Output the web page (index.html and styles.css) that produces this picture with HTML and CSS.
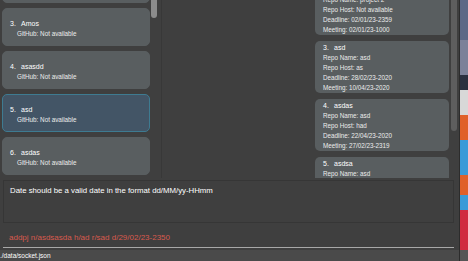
FILE: index.html
```html
<!DOCTYPE html>
<html>

<head>
    <title>Project Book</title>
    <link rel="stylesheet" href="styles.css">
</head>

<body>
    <div class="window">
        <div class="app">
            <div class="panels">
                <div class="person-pane">
                    <div class="person-list">
                        <div class="person-card">
                            <p class="card-title"><span class="index">2.</span>Bob</p>
                            <p class="card-line">GitHub: Not available</p>
                        </div>
                        <div class="person-card">
                            <p class="card-title"><span class="index">3.</span>Amos</p>
                            <p class="card-line">GitHub: Not available</p>
                        </div>
                        <div class="person-card">
                            <p class="card-title"><span class="index">4.</span>asasdd</p>
                            <p class="card-line">GitHub: Not available</p>
                        </div>
                        <div class="person-card selected">
                            <p class="card-title"><span class="index">5.</span>asd</p>
                            <p class="card-line">GitHub: Not available</p>
                        </div>
                        <div class="person-card">
                            <p class="card-title"><span class="index">6.</span>asdas</p>
                            <p class="card-line">GitHub: Not available</p>
                        </div>
                    </div>
                    <div class="scrollbar">
                        <div class="thumb person-thumb"></div>
                    </div>
                </div>

                <div class="middle-pane"></div>

                <div class="project-pane">
                    <div class="project-list">
                        <div class="project-card">
                            <p class="card-title"><span class="index">2.</span>project 2</p>
                            <p class="card-line">Repo Name: project 2</p>
                            <p class="card-line">Repo Host: Not available</p>
                            <p class="card-line">Deadline: 02/01/23-2359</p>
                            <p class="card-line">Meeting: 02/01/23-1000</p>
                        </div>
                        <div class="project-card">
                            <p class="card-title"><span class="index">3.</span>asd</p>
                            <p class="card-line">Repo Name: asd</p>
                            <p class="card-line">Repo Host: as</p>
                            <p class="card-line">Deadline: 28/02/23-2020</p>
                            <p class="card-line">Meeting: 10/04/23-2020</p>
                        </div>
                        <div class="project-card">
                            <p class="card-title"><span class="index">4.</span>asdas</p>
                            <p class="card-line">Repo Name: asd</p>
                            <p class="card-line">Repo Host: had</p>
                            <p class="card-line">Deadline: 22/04/23-2020</p>
                            <p class="card-line">Meeting: 27/02/23-2319</p>
                        </div>
                        <div class="project-card">
                            <p class="card-title"><span class="index">5.</span>asdsa</p>
                            <p class="card-line">Repo Name: asd</p>
                            <p class="card-line">Repo Host: asd</p>
                            <p class="card-line">Deadline: 01/01/23-2020</p>
                            <p class="card-line">Meeting: 01/01/23-2020</p>
                        </div>
                    </div>
                    <div class="scrollbar">
                        <div class="thumb project-thumb"></div>
                    </div>
                </div>
            </div>

            <div class="result-display">
                <p>Date should be a valid date in the format dd/MM/yy-HHmm</p>
            </div>

            <div class="command-box">
                <p class="command-text error">addpj n/asdsasda h/ad r/sad d/29/02/23-2350</p>
            </div>

            <div class="status-bar">./data/socket.json</div>
        </div>

        <!-- bit of the desktop showing past the window edge -->
        <div class="desktop">
            <div class="strip s1"></div>
            <div class="strip s2"></div>
            <div class="strip s3"></div>
            <div class="strip s4"></div>
            <div class="strip s5"></div>
            <div class="strip s6"></div>
            <div class="strip s7"></div>
            <div class="strip s8"></div>
            <div class="strip s9"></div>
            <div class="strip s10"></div>
        </div>
    </div>
</body>

</html>
```

FILE: styles.css
```css
body {
    font-family: "Liberation Sans", Arial, sans-serif;
    background-color: #3f3f3f;
    color: #ffffff;
    margin: 0;
    padding: 0;
    width: 468px;
    height: 261px;
    overflow: hidden;
}

p {
    margin: 0;
}

.window {
    display: flex;
    height: 261px;
}

.app {
    width: 460px;
    display: flex;
    flex-direction: column;
    background-color: #3f3f3f;
}

.panels {
    height: 180px;
    display: flex;
    overflow: hidden;
}

/* person list */
.person-pane {
    width: 162px;
    display: flex;
    gap: 1px;
    padding-left: 2px;
    box-sizing: border-box;
    border-right: 1px solid #383838;
}

.person-list {
    width: 148px;
    display: flex;
    flex-direction: column;
    gap: 5px;
    margin-top: -35px;
}

.person-card {
    flex: none;
    height: 38px;
    box-sizing: border-box;
    padding: 10px 0 8px 7px;
    background-color: #595e60;
    border: 1px solid #595e60;
    border-radius: 5px;
}

.person-card.selected {
    background-color: #435566;
    border-color: #3e7b91;
}

.person-card .card-line {
    padding-left: 7px;
}

.card-title {
    font-size: 7px;
    line-height: 10px;
}

.index {
    display: inline-block;
    width: 11px;
}

.card-line {
    font-size: 6.3px;
    line-height: 10px;
    color: #ececec;
}

/* scrollbars */
.scrollbar {
    width: 6px;
}

.thumb {
    background-color: #8c8c8c;
    border-radius: 0 0 3px 3px;
}

.person-thumb {
    height: 18px;
}

.project-thumb {
    height: 131px;
    background-color: #5e5e5e;
}

.middle-pane {
    width: 149px;
}

/* project list */
.project-pane {
    flex: 1;
    display: flex;
    gap: 2px;
    padding-left: 4px;
}

.project-list {
    width: 134px;
    display: flex;
    flex-direction: column;
    gap: 6px;
    margin-top: -17px;
}

.project-card {
    flex: none;
    height: 52px;
    box-sizing: border-box;
    padding: 2px 0 0 8px;
    background-color: #595e60;
    border-radius: 5px;
}

/* result + command */
.result-display {
    height: 43px;
    margin: 2px 5px 0 3px;
    padding: 4px 6px;
    box-sizing: border-box;
    border: 1px solid #363636;
    font-size: 7.8px;
    line-height: 11px;
}

.command-box {
    height: 25px;
    margin: 0 5px 0 3px;
    display: flex;
    align-items: flex-end;
}

.command-text {
    flex: 1;
    padding: 0 6px 4px;
    font-size: 8px;
    line-height: 11px;
    border-bottom: 1px solid #a8a8a8;
}

.error {
    color: #d85a4e;
}

.status-bar {
    margin-top: 2px;
    flex: 1;
    background-color: #4a4a4a;
    font-size: 6.5px;
    line-height: 11px;
    padding-left: 0;
}

/* desktop strip */
.desktop {
    width: 8px;
    display: flex;
    flex-direction: column;
    border-left: 1px solid #2c2c2c;
}

.strip {
    flex: none;
}

.s1 { height: 40px; background-color: #5d6886; }
.s2 { height: 35px; background-color: #7b8199; }
.s3 { height: 15px; background-color: #2a3040; }
.s4 { height: 25px; background-color: #d8d8d8; }
.s5 { height: 25px; background-color: #e0602a; }
.s6 { height: 35px; background-color: #3a9ad8; }
.s7 { height: 20px; background-color: #e0602a; }
.s8 { height: 15px; background-color: #3a9ad8; }
.s9 { height: 40px; background-color: #d02a40; }
.s10 { height: 11px; background-color: #555555; }
```
